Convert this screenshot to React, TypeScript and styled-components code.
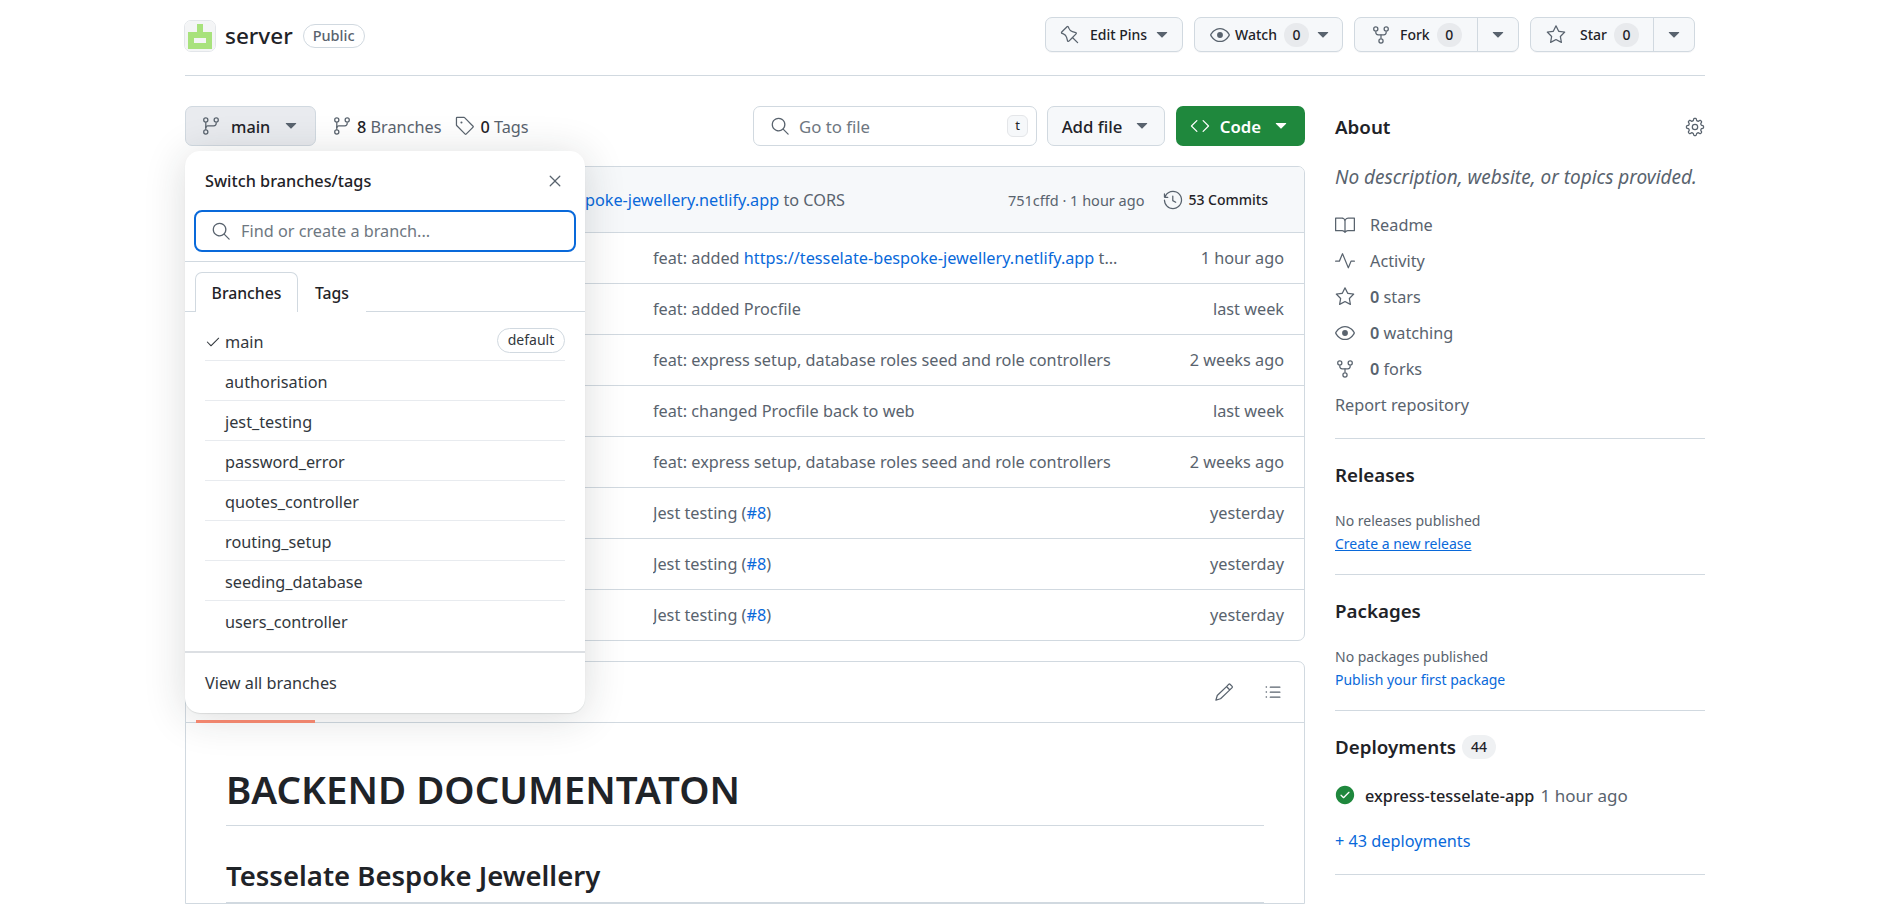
import * as React from 'react';

import styled, { createGlobalStyle } from 'styled-components';
import {
  GoBook,
  GoCheck,
  GoCheckCircleFill,
  GoCode,
  GoEye,
  GoGear,
  GoGitBranch,
  GoHistory,
  GoListUnordered,
  GoPencil,
  GoPin,
  GoPulse,
  GoRepoForked,
  GoSearch,
  GoStar,
  GoTag,
  GoTriangleDown,
  GoX,
} from 'react-icons/go';

const TEXT = '#1f2328';
const MUTED = '#59636e';
const PLACEHOLDER = '#6e7781';
const BORDER = '#d1d9e0';
const LINK = '#0969da';

const GlobalStyle = createGlobalStyle`
  html, body {
    margin: 0;
    height: 905px;
    overflow: hidden;
    background: #fff;
  }
  body {
    color: ${TEXT};
    font-family: "Noto Sans", "Open Sans", sans-serif;
    font-size: 16.25px;
  }
  * {
    box-sizing: border-box;
  }
`;

const Page = styled.div`
  margin-left: 185px;
  width: 1520px;
`;

const RepoHeader = styled.header`
  align-items: flex-start;
  border-bottom: 1px solid ${BORDER};
  display: flex;
  height: 76px;
  justify-content: space-between;
  padding-top: 17px;
`;

const RepoTitle = styled.div`
  align-items: center;
  display: flex;
  margin-top: 3px;
`;

const Avatar = styled.svg`
  border: 1px solid #e3e6ea;
  border-radius: 7px;
  display: block;
  height: 32px;
  margin-left: -1px;
  width: 32px;
`;

const RepoName = styled.span`
  font-size: 22.5px;
  font-weight: 500;
  line-height: 30px;
  margin-left: 9px;
`;

const Pill = styled.span`
  border: 1px solid ${BORDER};
  border-radius: 13px;
  color: ${MUTED};
  font-size: 14.5px;
  font-weight: 500;
  height: 24px;
  line-height: 21px;
  margin-left: 10px;
  padding: 0 9px;
  text-align: center;
`;

const RepoActions = styled.div`
  display: flex;
  gap: 11px;
  margin-right: 10px;
`;

const ActionButton = styled.div<{ $width: number; $pad: number }>`
  align-items: center;
  background: #f6f8fa;
  border: 1px solid ${BORDER};
  border-radius: 7px;
  box-shadow: 0 1px 0 rgba(31, 35, 40, 0.04);
  color: ${TEXT};
  display: flex;
  font-size: 14px;
  font-weight: 500;
  height: 35px;
  padding-left: ${p => p.$pad}px;
  white-space: nowrap;
  width: ${p => p.$width}px;
  svg {
    color: ${MUTED};
    flex: none;
  }
`;

const ActionSplit = styled.div<{ $width: number; $plain?: boolean }>`
  align-items: center;
  border-left: 1px solid ${p => (p.$plain ? 'transparent' : BORDER)};
  display: flex;
  flex: none;
  height: 100%;
  justify-content: center;
  margin-left: auto;
  padding-right: ${p => (p.$plain ? 8 : 0)}px;
  width: ${p => p.$width}px;
`;

const ActionLabel = styled.span<{ $gap: number }>`
  margin-left: ${p => p.$gap}px;
`;

const Counter = styled.span`
  background: #e8eaed;
  border-radius: 13px;
  font-size: 14px;
  height: 24px;
  line-height: 24px;
  margin: 0 4px 0 7px;
  text-align: center;
  width: 25px;
`;

const Layout = styled.div`
  display: grid;
  gap: 30px;
  grid-template-columns: 1120px 370px;
  padding-top: 30px;
`;

const MainColumn = styled.main`
  position: relative;
`;

const Toolbar = styled.div`
  align-items: center;
  display: flex;
  height: 40px;
  margin-bottom: 20px;
`;

const BranchButton = styled.div`
  align-items: center;
  background: #e9ebef;
  border: 1px solid ${BORDER};
  border-radius: 7px;
  display: flex;
  font-weight: 500;
  height: 40px;
  padding-left: 15px;
  width: 131px;
  svg {
    color: ${MUTED};
    flex: none;
  }
`;

const BranchLabel = styled.span`
  margin: 2px 11px 0 10px;
`;

const RefLink = styled.span`
  align-items: center;
  color: ${MUTED};
  display: flex;
  gap: 5px;
  svg {
    color: ${MUTED};
  }
  span {
    padding-top: 2px;
  }
  b {
    color: ${TEXT};
    font-weight: 500;
  }
`;

const RefLinks = styled.div`
  display: flex;
  gap: 14px;
  margin-left: 16px;
`;

const FileSearch = styled.div`
  align-items: center;
  border: 1px solid ${BORDER};
  border-radius: 7px;
  color: ${PLACEHOLDER};
  display: flex;
  font-size: 16.75px;
  height: 40px;
  margin-left: auto;
  padding: 0 8px 0 16px;
  width: 284px;
  svg {
    color: ${MUTED};
    flex: none;
  }
`;

const FilePlaceholder = styled.span`
  flex: 1;
  margin-left: 9px;
  padding-top: 1px;
`;

const Kbd = styled.span`
  background: #f6f8fa;
  border: 1px solid #e4e6e9;
  border-radius: 6px;
  color: ${TEXT};
  font-size: 13px;
  height: 22px;
  line-height: 19px;
  text-align: center;
  width: 21px;
`;

const AddFileButton = styled.div`
  align-items: center;
  background: #f6f8fa;
  border: 1px solid ${BORDER};
  border-radius: 7px;
  display: flex;
  font-size: 16.75px;
  font-weight: 500;
  gap: 10px;
  height: 40px;
  justify-content: center;
  margin-left: 10px;
  padding-left: 2px;
  width: 118px;
  svg {
    color: ${MUTED};
  }
`;

const CodeButton = styled.div`
  align-items: center;
  background: #1f883d;
  border-radius: 7px;
  color: #fff;
  display: flex;
  font-size: 16.75px;
  font-weight: 600;
  gap: 10px;
  height: 40px;
  justify-content: center;
  margin-left: 11px;
  width: 129px;
`;

const FileTable = styled.section`
  border: 1px solid ${BORDER};
  border-radius: 7px;
  overflow: hidden;
`;

const CommitHeader = styled.div`
  align-items: center;
  background: #f6f8fa;
  display: flex;
  height: 65px;
  padding-right: 36px;
`;

const HeaderMessage = styled.div`
  color: ${MUTED};
  direction: rtl;
  overflow: hidden;
  white-space: nowrap;
  width: 659px;
  span {
    direction: ltr;
    unicode-bidi: isolate;
  }
`;

const CommitMeta = styled.span`
  color: ${MUTED};
  font-size: 14.5px;
  margin-left: auto;
`;

const CommitCount = styled.span`
  align-items: center;
  display: flex;
  font-size: 14px;
  font-weight: 500;
  gap: 5px;
  margin-left: 19px;
  svg {
    color: ${MUTED};
  }
`;

const Link = styled.a`
  color: ${LINK};
  text-decoration: none;
`;

const FileRow = styled.div`
  align-items: center;
  border-top: 1px solid ${BORDER};
  color: ${MUTED};
  display: grid;
  grid-template-columns: 467px 472px 1fr;
  height: 51px;
  padding-right: 20px;
`;

const RowMessage = styled.div`
  grid-column: 2;
  overflow: hidden;
  text-overflow: ellipsis;
  white-space: nowrap;
`;

const RowAge = styled.div`
  grid-column: 3;
  text-align: right;
`;

const Readme = styled.section`
  border: 1px solid ${BORDER};
  border-radius: 7px 7px 0 0;
  margin-top: 20px;
`;

const ReadmeBar = styled.div`
  align-items: center;
  border-bottom: 1px solid ${BORDER};
  display: flex;
  gap: 29px;
  height: 61px;
  justify-content: flex-end;
  padding-right: 21px;
  position: relative;
  svg {
    color: ${MUTED};
  }
`;

const ActiveTab = styled.div`
  background: #fd8c73;
  bottom: -1px;
  height: 3px;
  left: 10px;
  position: absolute;
  width: 119px;
`;

const ReadmeBody = styled.article`
  padding: 41px 40px 0;
`;

const Heading1 = styled.h1`
  border-bottom: 1px solid ${BORDER};
  font-size: 38.5px;
  font-weight: 600;
  line-height: 50px;
  margin: 0 0 30px;
  padding-bottom: 11px;
`;

const Heading2 = styled.h2`
  border-bottom: 1px solid ${BORDER};
  font-size: 27.5px;
  font-weight: 600;
  line-height: 40px;
  margin: 0;
  padding-bottom: 6px;
`;

const Dropdown = styled.div`
  background: #fff;
  border-radius: 15px;
  box-shadow: 0 1px 1px rgba(31, 35, 40, 0.1), 0 4px 42px rgba(31, 35, 40, 0.16);
  height: 562px;
  left: 0;
  position: absolute;
  top: 45px;
  width: 400px;
  z-index: 10;
`;

const DropdownHead = styled.div`
  align-items: center;
  display: flex;
  font-size: 16.25px;
  font-weight: 500;
  height: 59px;
  justify-content: space-between;
  padding: 0 20px;
  svg {
    color: ${MUTED};
  }
`;

const BranchFilter = styled.div`
  align-items: center;
  border: 2px solid ${LINK};
  border-radius: 8px;
  color: ${PLACEHOLDER};
  display: flex;
  gap: 10px;
  height: 42px;
  margin: 0 9px;
  padding-left: 15px;
  svg {
    color: ${MUTED};
  }
`;

const DropdownTabs = styled.div`
  align-items: flex-end;
  border-bottom: 1px solid ${BORDER};
  border-top: 1px solid ${BORDER};
  display: flex;
  height: 51px;
  margin-top: 9px;
  padding-left: 10px;
`;

const TabItem = styled.div<{ $active?: boolean }>`
  background: #fff;
  border: 1px solid ${p => (p.$active ? BORDER : 'transparent')};
  border-bottom: 0;
  border-radius: 7px 7px 0 0;
  font-size: 15.75px;
  font-weight: 500;
  height: 40px;
  line-height: 40px;
  margin-bottom: -1px;
  text-align: center;
  width: ${p => (p.$active ? 103 : 68)}px;
`;

const BranchList = styled.div`
  padding: 9px 20px 0;
`;

const BranchRow = styled.div`
  align-items: center;
  border-bottom: 1px solid #e8ebef;
  color: #32373d;
  display: flex;
  height: 40px;
  padding: 2px 0 0 20px;
  position: relative;
  &:last-child {
    border-bottom: 0;
  }
`;

const CheckMark = styled(GoCheck)`
  left: 0;
  position: absolute;
  top: 13px;
`;

const DefaultPill = styled.span`
  border: 1px solid ${BORDER};
  border-radius: 13px;
  font-size: 14px;
  height: 25px;
  line-height: 22px;
  margin: -3px 0 0 auto;
  text-align: center;
  width: 68px;
`;

const DropdownFoot = styled.div`
  align-items: center;
  border-top: 2px solid #dcdfe3;
  color: #32373d;
  display: flex;
  height: 61px;
  margin-top: 10px;
  padding-left: 20px;
`;

const Sidebar = styled.aside`
  display: flex;
  flex-direction: column;
`;

const Section = styled.section`
  border-bottom: 1px solid ${BORDER};
  padding: 21px 0 19px;
  &:first-child {
    padding: 6px 0 15px;
  }
  &:last-child {
    border-bottom: 0;
  }
`;

const SectionHeading = styled.h2`
  align-items: center;
  display: flex;
  font-size: 18.75px;
  font-weight: 600;
  line-height: 30px;
  margin: 0;
  justify-content: space-between;
`;

const Description = styled.p`
  color: ${MUTED};
  font-size: 19px;
  font-style: italic;
  line-height: 30px;
  margin: 20px 0 15px;
  white-space: nowrap;
`;

const MetaRow = styled.div`
  align-items: center;
  color: ${MUTED};
  display: flex;
  gap: 15px;
  height: 36px;
  svg {
    flex: none;
  }
  b {
    font-weight: 600;
  }
`;

const SmallNote = styled.div`
  color: ${MUTED};
  font-size: 14px;
  line-height: 23px;
  margin-top: 19px;
`;

const SmallLink = styled(Link)<{ $underline?: boolean }>`
  display: block;
  font-size: 14px;
  line-height: 23px;
  text-decoration: ${p => (p.$underline ? 'underline' : 'none')};
`;

const CountBadge = styled.span`
  background: #eff1f3;
  border-radius: 13px;
  font-size: 14px;
  font-weight: 500;
  height: 24px;
  line-height: 24px;
  margin-left: 6px;
  text-align: center;
  width: 34px;
`;

const DeployHeading = styled(SectionHeading)`
  justify-content: flex-start;
`;

const DeployRow = styled.div`
  align-items: center;
  display: flex;
  gap: 10px;
  height: 30px;
  margin-top: 18px;
  svg {
    color: #1f883d;
    flex: none;
  }
  b {
    font-weight: 500;
  }
  span {
    color: ${MUTED};
    font-size: 17px;
    margin-left: 2px;
  }
`;

const MoreDeploys = styled(Link)`
  display: block;
  line-height: 30px;
  margin: 16px 0 -1px;
`;

const branches = [
  'authorisation',
  'jest_testing',
  'password_error',
  'quotes_controller',
  'routing_setup',
  'seeding_database',
  'users_controller',
];

const CORS_URL = 'https://tesselate-bespoke-jewellery.netlify.app';
const SETUP_MSG = 'feat: express setup, database roles seed and role controllers';

const rows: { message: React.ReactNode; age: string }[] = [
  {
    message: (
      <>
        feat: added <Link>{CORS_URL}</Link> to CORS
      </>
    ),
    age: '1 hour ago',
  },
  { message: 'feat: added Procfile', age: 'last week' },
  { message: SETUP_MSG, age: '2 weeks ago' },
  { message: 'feat: changed Procfile back to web', age: 'last week' },
  { message: SETUP_MSG, age: '2 weeks ago' },
  { message: <>Jest testing (<Link>#8</Link>)</>, age: 'yesterday' },
  { message: <>Jest testing (<Link>#8</Link>)</>, age: 'yesterday' },
  { message: <>Jest testing (<Link>#8</Link>)</>, age: 'yesterday' },
];

const meta = [
  { icon: <GoBook size={20} />, label: 'Readme' },
  { icon: <GoPulse size={20} />, label: 'Activity' },
  { icon: <GoStar size={20} />, label: <><b>0</b> stars</> },
  { icon: <GoEye size={20} />, label: <><b>0</b> watching</> },
  { icon: <GoRepoForked size={20} />, label: <><b>0</b> forks</> },
];

const App = () => {
  return (
    <Page>
      <GlobalStyle />
      <RepoHeader>
        <RepoTitle>
          <Avatar viewBox="0 0 30 30">
            <rect width="30" height="30" fill="#f4f5f6" />
            <path d="M12 3h6v8h9v17H3V11h9z" fill="#a8e27c" />
            <rect x="9" y="17" width="12" height="5" fill="#f4f5f6" />
          </Avatar>
          <RepoName>server</RepoName>
          <Pill>Public</Pill>
        </RepoTitle>
        <RepoActions>
          <ActionButton $width={138} $pad={14}>
            <GoPin size={20} />
            <ActionLabel $gap={10}>Edit Pins</ActionLabel>
            <ActionSplit as="span" $width={34} $plain>
              <GoTriangleDown size={20} />
            </ActionSplit>
          </ActionButton>
          <ActionButton $width={149} $pad={15}>
            <GoEye size={20} />
            <ActionLabel $gap={5}>Watch</ActionLabel>
            <Counter>0</Counter>
            <GoTriangleDown size={20} />
          </ActionButton>
          <ActionButton $width={165} $pad={16}>
            <GoRepoForked size={20} />
            <ActionLabel $gap={9}>Fork</ActionLabel>
            <Counter>0</Counter>
            <ActionSplit $width={41}>
              <GoTriangleDown size={20} />
            </ActionSplit>
          </ActionButton>
          <ActionButton $width={165} $pad={15}>
            <GoStar size={20} />
            <ActionLabel $gap={14}>Star</ActionLabel>
            <Counter>0</Counter>
            <ActionSplit $width={41}>
              <GoTriangleDown size={20} />
            </ActionSplit>
          </ActionButton>
        </RepoActions>
      </RepoHeader>

      <Layout>
        <MainColumn>
          <Toolbar>
            <BranchButton>
              <GoGitBranch size={20} />
              <BranchLabel>main</BranchLabel>
              <GoTriangleDown size={20} />
            </BranchButton>
            <RefLinks>
              <RefLink>
                <GoGitBranch size={20} />
                <span>
                  <b>8</b> Branches
                </span>
              </RefLink>
              <RefLink>
                <GoTag size={20} />
                <span>
                  <b>0</b> Tags
                </span>
              </RefLink>
            </RefLinks>
            <FileSearch>
              <GoSearch size={20} />
              <FilePlaceholder>Go to file</FilePlaceholder>
              <Kbd>t</Kbd>
            </FileSearch>
            <AddFileButton>
              Add file
              <GoTriangleDown size={20} />
            </AddFileButton>
            <CodeButton>
              <GoCode size={20} />
              Code
              <GoTriangleDown size={20} />
            </CodeButton>
          </Toolbar>

          <Dropdown>
            <DropdownHead>
              Switch branches/tags
              <GoX size={20} />
            </DropdownHead>
            <BranchFilter>
              <GoSearch size={20} />
              Find or create a branch...
            </BranchFilter>
            <DropdownTabs>
              <TabItem $active>Branches</TabItem>
              <TabItem>Tags</TabItem>
            </DropdownTabs>
            <BranchList>
              <BranchRow>
                <CheckMark size={16} />
                main
                <DefaultPill>default</DefaultPill>
              </BranchRow>
              {branches.map(name => (
                <BranchRow key={name}>{name}</BranchRow>
              ))}
            </BranchList>
            <DropdownFoot>View all branches</DropdownFoot>
          </Dropdown>

          <FileTable>
            <CommitHeader>
              <HeaderMessage>
                <span>
                  feat: added <Link>{CORS_URL}</Link> to CORS
                </span>
              </HeaderMessage>
              <CommitMeta>751cffd · 1 hour ago</CommitMeta>
              <CommitCount>
                <GoHistory size={20} />
                53 Commits
              </CommitCount>
            </CommitHeader>
            {rows.map((row, i) => (
              <FileRow key={i}>
                <RowMessage>{row.message}</RowMessage>
                <RowAge>{row.age}</RowAge>
              </FileRow>
            ))}
          </FileTable>

          <Readme>
            <ReadmeBar>
              <ActiveTab />
              <GoPencil size={20} />
              <GoListUnordered size={20} />
            </ReadmeBar>
            <ReadmeBody>
              <Heading1>BACKEND DOCUMENTATON</Heading1>
              <Heading2>Tesselate Bespoke Jewellery</Heading2>
            </ReadmeBody>
          </Readme>
        </MainColumn>

        <Sidebar>
          <Section>
            <SectionHeading>
              About
              <GoGear size={20} color={MUTED} />
            </SectionHeading>
            <Description>No description, website, or topics provided.</Description>
            {meta.map((item, i) => (
              <MetaRow key={i}>
                {item.icon}
                <span>{item.label}</span>
              </MetaRow>
            ))}
            <MetaRow>Report repository</MetaRow>
          </Section>
          <Section>
            <SectionHeading>Releases</SectionHeading>
            <SmallNote>No releases published</SmallNote>
            <SmallLink $underline>Create a new release</SmallLink>
          </Section>
          <Section>
            <SectionHeading>Packages</SectionHeading>
            <SmallNote>No packages published</SmallNote>
            <SmallLink>Publish your first package</SmallLink>
          </Section>
          <Section>
            <DeployHeading>
              Deployments
              <CountBadge>44</CountBadge>
            </DeployHeading>
            <DeployRow>
              <GoCheckCircleFill size={20} />
              <div>
                <b>express-tesselate-app</b> <span>1 hour ago</span>
              </div>
            </DeployRow>
            <MoreDeploys>+ 43 deployments</MoreDeploys>
          </Section>
          <Section>
            <SectionHeading>Languages</SectionHeading>
          </Section>
        </Sidebar>
      </Layout>
    </Page>
  );
};

export default App;
